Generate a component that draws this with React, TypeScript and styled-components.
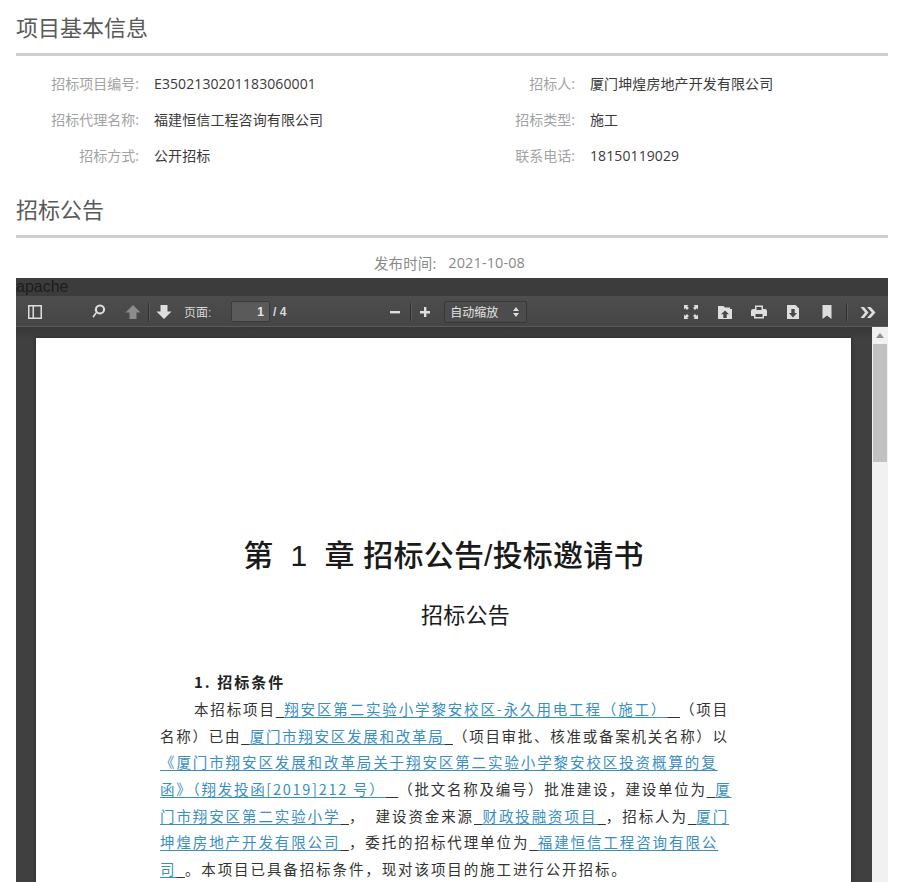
import React from 'react';
import styled, { createGlobalStyle } from 'styled-components';

const GlobalStyle = createGlobalStyle`
  html, body {
    margin: 0;
    padding: 0;
    background: #fff;
    height: 882px;
    overflow: hidden;
  }
  #root {
    height: 882px;
  }
`;

const SANS = `"Open Sans", "Noto Sans CJK SC", sans-serif`;

const Wrapper = styled.div`
  display: flex;
  flex-direction: column;
  width: 872px;
  height: 882px;
  margin-left: 16px;
  font-family: ${SANS};
`;

const SectionHead = styled.h2`
  margin: 0;
  height: 53px;
  box-sizing: content-box;
  border-bottom: 3px solid #cfcfcf;
  font-size: 22px;
  font-weight: 400;
  line-height: 55px;
  color: #595959;
`;

const SecondHead = styled(SectionHead)`
  height: 36px;
  line-height: 37px;
  padding-bottom: 8px;
`;

const InfoGrid = styled.div`
  display: grid;
  grid-template-columns: 436px 1fr;
  grid-auto-rows: 36px;
  padding-top: 9px;
  margin-bottom: 18px;
`;

const InfoItem = styled.div`
  display: flex;
  align-items: center;
  height: 36px;
`;

const InfoLabel = styled.span`
  width: 123px;
  flex-shrink: 0;
  text-align: right;
  font-size: 14px;
  color: #a3a3a3;
`;

const InfoValue = styled.span`
  margin-left: 15px;
  font-size: 14px;
  letter-spacing: 0.1px;
  color: #3a3a3a;
`;

const PublishRow = styled.div`
  height: 40px;
  box-sizing: border-box;
  padding: 8px 5px 0 0;
  display: flex;
  justify-content: center;
  align-items: center;
  gap: 12px;
  font-size: 14.5px;
  letter-spacing: 0.1px;
  color: #8a8a8a;
`;

const Viewer = styled.div`
  flex: 1;
  display: flex;
  flex-direction: column;
  min-height: 0;
  background: #404040;
`;

const ApacheBar = styled.div`
  height: 18px;
  background: #3c3c3c;
  font-family: "Liberation Sans", sans-serif;
  font-size: 16px;
  line-height: 17px;
  color: #1d1d1d;
`;

const Toolbar = styled.div`
  height: 31px;
  display: flex;
  align-items: center;
  background: linear-gradient(#4d4d4d, #454545);
  box-shadow: inset 0 -1px 0 #5a5a5a;
  color: #e0e0e0;
  font-family: "Liberation Sans", "Noto Sans CJK SC", sans-serif;
  font-size: 12px;
`;

const ToolIcon = styled.svg<{ $ml?: number; $dim?: boolean }>`
  flex-shrink: 0;
  width: 18px;
  height: 18px;
  margin-left: ${(p) => p.$ml ?? 0}px;
  fill: ${(p) => (p.$dim ? '#8c8c8c' : '#dedede')};
`;

const Sep = styled.span<{ $ml: number }>`
  width: 1px;
  height: 18px;
  flex-shrink: 0;
  margin-left: ${(p) => p.$ml}px;
  background: #2f2f2f;
  box-shadow: 1px 0 0 #5a5a5a;
`;

const PageLabel = styled.span`
  margin-left: 11px;
  width: 47px;
  flex-shrink: 0;
  font-size: 12px;
  color: #d8d8d8;
`;

const PageInput = styled.div`
  width: 39px;
  height: 21px;
  box-sizing: border-box;
  flex-shrink: 0;
  padding-right: 5px;
  text-align: right;
  line-height: 20px;
  font-weight: 700;
  background: #5a5a5a;
  border: 1px solid #3a3a3a;
  border-radius: 2px;
  color: #e8e8e8;
`;

const PageCount = styled.span`
  margin-left: 3px;
  font-weight: 700;
  color: #d8d8d8;
`;

const ZoomSelect = styled.div`
  width: 83px;
  height: 22px;
  box-sizing: border-box;
  flex-shrink: 0;
  margin-left: 10px;
  padding: 0 7px 0 5px;
  display: flex;
  align-items: center;
  justify-content: space-between;
  background: #4c4c4c;
  border: 1px solid #383838;
  border-radius: 2px;
  font-size: 12px;
  color: #e4e4e4;
`;

const ViewerBody = styled.div`
  flex: 1;
  min-height: 0;
  display: flex;
`;

const Canvas = styled.div`
  flex: 1;
  min-width: 0;
  overflow: hidden;
  padding: 11px 21px 0 20px;
  background: linear-gradient(#383838, #404040 12px);
`;

const Scrollbar = styled.div`
  width: 16px;
  flex-shrink: 0;
  background: #f1f1f1;
  display: flex;
  flex-direction: column;
  align-items: center;
`;

const ScrollArrow = styled.div`
  margin-top: 6px;
  border-left: 4px solid transparent;
  border-right: 4px solid transparent;
  border-bottom: 5px solid #8f8f8f;
`;

const ScrollThumb = styled.div`
  width: 14px;
  height: 118px;
  margin-top: 6px;
  background: #c1c1c1;
`;

const Page = styled.div`
  height: 800px;
  background: #fff;
  box-shadow: 0 0 4px rgba(0, 0, 0, 0.4);
  padding-top: 198px;
  box-sizing: border-box;
  font-family: "Noto Sans CJK SC", sans-serif;
  color: #222;
`;

const DocTitle = styled.h1`
  margin: 0;
  text-align: center;
  white-space: pre;
  font-family: "Liberation Sans", "Noto Sans CJK SC", sans-serif;
  font-size: 30px;
  letter-spacing: 0.2px;
  line-height: 40px;
  font-weight: 500;
  color: #1a1a1a;
`;

const DocSub = styled.h2`
  margin: 19px 0 0;
  padding-left: 44px;
  text-align: center;
  font-size: 22px;
  line-height: 36px;
  font-weight: 400;
  letter-spacing: 0.3px;
  color: #1a1a1a;
`;

const DocSection = styled.div`
  margin: 38px 0 0 158px;
  font-size: 15px;
  line-height: 26px;
  font-weight: 700;
  letter-spacing: 2px;
  color: #222;
`;

const Para = styled.div`
  margin: 1px 0 0 124px;
  font-size: 14.5px;
  color: #333;
`;

const Line = styled.div<{ $indent?: boolean; $ls?: number }>`
  height: 26.7px;
  line-height: 26.7px;
  white-space: pre;
  letter-spacing: ${(p) => p.$ls ?? 1.73}px;
  padding-left: ${(p) => (p.$indent ? 34 : 0)}px;
`;

const Link = styled.span`
  color: #3a8fc2;
  text-decoration: underline;
  text-underline-offset: 2px;
`;

const Blank = styled.span`
  letter-spacing: 1px;
  text-decoration: underline;
  text-underline-offset: 2px;
  color: #333;
`;

const infoRows = [
  { label: '招标项目编号:', value: 'E3502130201183060001', label2: '招标人:', value2: '厦门坤煌房地产开发有限公司' },
  { label: '招标代理名称:', value: '福建恒信工程咨询有限公司', label2: '招标类型:', value2: '施工' },
  { label: '招标方式:', value: '公开招标', label2: '联系电话:', value2: '18150119029' },
];

export default function App() {
  return (
    <Wrapper>
      <GlobalStyle />
      <SectionHead>项目基本信息</SectionHead>
      <InfoGrid>
        {infoRows.map((r) => (
          <React.Fragment key={r.label}>
            <InfoItem>
              <InfoLabel>{r.label}</InfoLabel>
              <InfoValue>{r.value}</InfoValue>
            </InfoItem>
            <InfoItem>
              <InfoLabel>{r.label2}</InfoLabel>
              <InfoValue>{r.value2}</InfoValue>
            </InfoItem>
          </React.Fragment>
        ))}
      </InfoGrid>
      <SecondHead>招标公告</SecondHead>
      <PublishRow>
        <span>发布时间:</span>
        <span>2021-10-08</span>
      </PublishRow>
      <Viewer>
        <ApacheBar>apache</ApacheBar>
        <Toolbar>
          <ToolIcon $ml={10} viewBox="0 0 18 18">
            <path fillRule="evenodd" d="M2 2h14v14H2zM3.5 3.5v11H6.5v-11zM8 3.5v11h6.5v-11z" />
          </ToolIcon>
          <ToolIcon $ml={46} viewBox="0 0 18 18">
            <path fillRule="evenodd" d="M10 1.5a5 5 0 1 1-3.2 8.8L3.6 14.8 2.4 13.6l3.2-4.4A5 5 0 0 1 10 1.5zM10 3.5a3 3 0 1 0 0 6 3 3 0 0 0 0-6z" />
          </ToolIcon>
          <ToolIcon $ml={16} $dim viewBox="0 0 18 18">
            <path d="M9 2l7.5 7.5H12.5V16h-7V9.5H1.500z" />
          </ToolIcon>
          <Sep $ml={6} />
          <ToolIcon $ml={6} viewBox="0 0 18 18">
            <path d="M5.500 2h7v6.500h4L9 16 1.500 8.500h4z" />
          </ToolIcon>
          <PageLabel>页面:</PageLabel>
          <PageInput>1</PageInput>
          <PageCount>/ 4</PageCount>
          <ToolIcon $ml={100} viewBox="0 0 18 18">
            <path d="M4 8h10v2.400H4z" />
          </ToolIcon>
          <Sep $ml={6} />
          <ToolIcon $ml={5} viewBox="0 0 18 18">
            <path d="M8 4h2.400v4H14v2.400h-3.600V14H8v-3.600H4V8h4z" />
          </ToolIcon>
          <ZoomSelect>
            <span>自动缩放</span>
            <svg width="6" height="10" viewBox="0 0 6 10" fill="#dedede">
              <path d="M3 0l3 4H0zM3 10L0 6h6z" />
            </svg>
          </ZoomSelect>
          <ToolIcon $ml={155} viewBox="0 0 18 18">
            <path d="M2 2h4.500L5.200 3.300l1.700 1.700-1.900 1.900-1.700-1.700L2 6.500zM16 2v4.500l-1.300-1.300-1.700 1.700-1.900-1.900 1.700-1.700L11.500 2zM2 16v-4.500l1.300 1.300 1.700-1.700 1.900 1.900-1.700 1.700L6.500 16zM16 16h-4.500l1.300-1.300-1.700-1.700 1.900-1.900 1.700 1.700 1.300-1.300z" />
          </ToolIcon>
          <ToolIcon $ml={16} viewBox="0 0 18 18">
            <path fillRule="evenodd" d="M2 3h5.500l1.500 1.500h5V6h2v10H2zM9 7.500l-4 3.800h2.300V15h3.400v-3.700H13z" />
          </ToolIcon>
          <ToolIcon $ml={16} viewBox="0 0 18 18">
            <path fillRule="evenodd" d="M5 2.500h8V6h2a2 2 0 0 1 2 2v5h-3v2.500H4V13H1V8a2 2 0 0 1 2-2h2zM6.500 4V7h5V4zM5.500 11v3h7v-3z" />
          </ToolIcon>
          <ToolIcon $ml={16} viewBox="0 0 18 18">
            <path fillRule="evenodd" d="M3 2h8.500L15 5.500V16H3zM7.300 6v4H5L9 14.500 13 10h-2.300V6z" />
          </ToolIcon>
          <ToolIcon $ml={16} viewBox="0 0 18 18">
            <path d="M4.500 2h9v14L9 12.500 4.500 16z" />
          </ToolIcon>
          <Sep $ml={10} />
          <ToolIcon $ml={12} viewBox="0 0 18 18">
            <path d="M1.500 4h3.500l4.500 5.500L5 15H1.500L6 9.500zM8 4h3.500L16.500 9.500 11.500 15H8l4.800-5.500z" />
          </ToolIcon>
        </Toolbar>
        <ViewerBody>
          <Canvas>
            <Page>
              <DocTitle>{'第  1  章 招标公告/投标邀请书'}</DocTitle>
              <DocSub>招标公告</DocSub>
              <DocSection>1. 招标条件</DocSection>
              <Para>
                <Line $indent $ls={1.85}>
                  本招标项目<Blank>{'  '}</Blank>
                  <Link>翔安区第二实验小学黎安校区-永久用电工程（施工）</Link>
                  <Blank>{'   '}</Blank>（项目
                </Line>
                <Line>
                  名称）已由<Blank>{'  '}</Blank>
                  <Link>厦门市翔安区发展和改革局</Link>
                  <Blank>{'  '}</Blank>（项目审批、核准或备案机关名称）以
                </Line>
                <Line $ls={1.9}>
                  <Link>《厦门市翔安区发展和改革局关于翔安区第二实验小学黎安校区投资概算的复</Link>
                </Line>
                <Line>
                  <Link>函》（翔发投函[2019]212 号）</Link>
                  <Blank>{'   '}</Blank>（批文名称及编号）批准建设，建设单位为<Blank>{'  '}</Blank>
                  <Link>厦</Link>
                </Line>
                <Line $ls={1.9}>
                  <Link>门市翔安区第二实验小学</Link>
                  <Blank>{'  '}</Blank>{'，  建设资金来源'}<Blank>{'  '}</Blank>
                  <Link>财政投融资项目</Link>
                  <Blank>{'  '}</Blank>，招标人为<Blank>{'  '}</Blank>
                  <Link>厦门</Link>
                </Line>
                <Line $ls={1.9}>
                  <Link>坤煌房地产开发有限公司</Link>
                  <Blank>{'  '}</Blank>，委托的招标代理单位为<Blank>{'  '}</Blank>
                  <Link>福建恒信工程咨询有限公</Link>
                </Line>
                <Line $ls={1.9}>
                  <Link>司</Link>
                  <Blank>{'  '}</Blank>。本项目已具备招标条件，现对该项目的施工进行公开招标。
                </Line>
              </Para>
            </Page>
          </Canvas>
          <Scrollbar>
            <ScrollArrow />
            <ScrollThumb />
          </Scrollbar>
        </ViewerBody>
      </Viewer>
    </Wrapper>
  );
}
